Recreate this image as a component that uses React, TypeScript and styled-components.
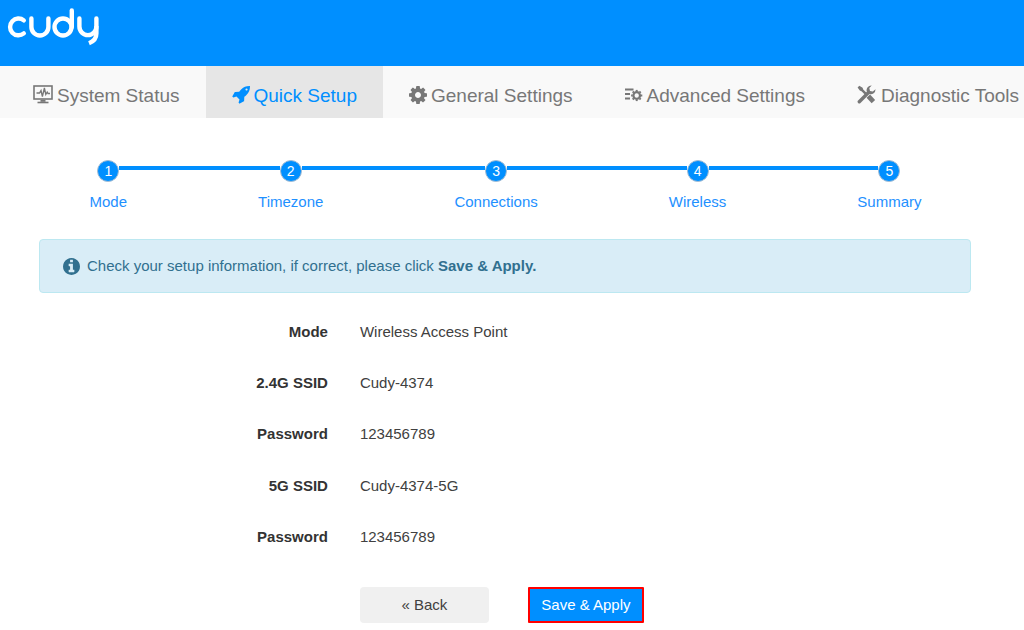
import React from "react";
import styled, { createGlobalStyle } from "styled-components";

const GlobalStyle = createGlobalStyle`
  *, *::before, *::after { box-sizing: border-box; }
  body {
    margin: 0;
    background: #fff;
    color: #404040;
    font: 15px/20px "Liberation Sans", Arial, sans-serif;
  }
`;

const Header = styled.header`
  height: 66px;
  padding: 5px 4px;
  background: #008fff;
`;

const LogoLink = styled.a`
  display: inline-block;
  svg { display: block; }
`;

const Nav = styled.nav`
  display: flex;
  height: 52px;
  padding-left: 7px;
  overflow: hidden;
  background: #f9f9f9;
`;

const NavLink = styled.a<{ $active?: boolean }>`
  display: flex;
  flex: none;
  align-items: center;
  gap: 4px;
  padding: 7px 26px 0;
  font-size: 19px;
  white-space: nowrap;
  text-decoration: none;
  color: ${(p) => (p.$active ? "#008fff" : "#777")};
  background: ${(p) => (p.$active ? "#e6e6e6" : "transparent")};
  svg { flex: none; margin-bottom: 2px; }
`;

const Main = styled.main`
  padding: 42px 53px 0 39px;
`;

const Steps = styled.ol`
  display: flex;
  margin: 0 -16px 27px -15px;
  padding: 0;
  list-style: none;
`;

const Step = styled.li`
  flex: 1 1 auto;
  text-align: center;
  color: #1e90ff;
`;

const Track = styled.div`
  display: flex;
  align-items: flex-start;
  margin-bottom: 10px;
`;

const Line = styled.span<{ $hidden?: boolean }>`
  flex: 1;
  height: 4px;
  margin-top: 6px;
  background: ${(p) => (p.$hidden ? "transparent" : "#008fff")};
`;

const Bullet = styled.span`
  width: 22px;
  height: 22px;
  border: 1px solid #a5bdd3;
  border-radius: 50%;
  background: #008fff;
  color: #fff;
  font-size: 14px;
`;

const Alert = styled.div`
  display: flex;
  align-items: center;
  gap: 7px;
  padding: 16px 23px;
  border: 1px solid #bce8f1;
  border-radius: 4px;
  background: #d9edf7;
  color: #31708f;
  svg { flex: none; }
  p { margin: 0; }
`;

const Summary = styled.dl`
  display: grid;
  grid-auto-rows: 1fr;
  min-height: 257px;
  margin: 13px 0 0;
`;

const Row = styled.div`
  display: grid;
  grid-template-columns: 31% 1fr;
  column-gap: 32px;
  align-items: center;
`;

const Term = styled.dt`
  text-align: right;
  font-weight: bold;
  color: #333;
`;

const Value = styled.dd`
  margin: 0;
`;

const Actions = styled.div`
  display: flex;
  gap: 39px;
  margin-top: 24px;
  grid-column: 2;
`;

const Button = styled.button<{ $primary?: boolean }>`
  min-width: ${(p) => (p.$primary ? 116 : 129)}px;
  height: 36px;
  padding: 0 8px;
  border: ${(p) => (p.$primary ? "2px solid #ff0000" : "0")};
  border-radius: ${(p) => (p.$primary ? 1 : 4)}px;
  background: ${(p) => (p.$primary ? "#008fff" : "#f0f0f0")};
  color: ${(p) => (p.$primary ? "#fff" : "#404040")};
  font: inherit;
  white-space: nowrap;
  cursor: pointer;
`;

const Logo = () => (
  <svg width="98" height="44" viewBox="4 5 98 44" fill="none" stroke="#fff" strokeWidth="4.4" strokeLinecap="round" role="img" aria-label="Cudy">
    <path d="M23.800 20.400A8.400 8.400 0 1 0 23.800 33.400" />
    <path d="M31.400 18.500V27a8.500 8.500 0 0 0 17 0V18.500" />
    <circle cx="63" cy="27" r="8.500" />
    <path d="M71.800 10.500V27" />
    <path d="M79.400 18.500V26.600a8.500 8.500 0 0 0 17 0V18.500" />
    <path d="M96.400 26v7.500c0 4.500-3 8-7.400 9.700" strokeLinecap="butt" />
  </svg>
);

const MonitorIcon = () => (
  <svg width="20" height="20" viewBox="0 0 20 20" fill="none" stroke="currentColor">
    <rect x="1" y="1" width="18" height="13" strokeWidth="1.6" />
    <path d="M3.500 8h3L8 5.500l1.400 6 2-8.500 1.400 6.500L14.200 7l.8 1.500h2" strokeWidth="1.300" />
    <path d="M7.500 15.800h5" strokeWidth="2" />
    <path d="M4.500 17.500h11" strokeWidth="1.600" />
  </svg>
);

const RocketIcon = () => (
  <svg width="18" height="18" viewBox="0 128 1664 1664" fill="currentColor">
    <path d="M1440 448q0-40-28-68t-68-28-68 28-28 68 28 68 68 28 68-28 28-68zm224-288q0 249-75.500 430.500t-253.500 360.500q-81 80-195 176l-20 379q-2 16-16 26l-384 224q-7 4-16 4-12 0-23-9l-64-64q-13-14-8-32l85-276-281-281-276 85q-3 1-9 1-14 0-23-9l-64-64q-17-19-5-39l224-384q10-14 26-16l379-20q96-114 176-195 188-187 358-258t431-71q14 0 24 9.500t10 22.500z" />
  </svg>
);

const CogIcon = () => (
  <svg width="18" height="18" viewBox="0 128 1536 1536" fill="currentColor" fillRule="evenodd">
    <path d="M1024 896q0 106-75 181t-181 75-181-75-75-181 75-181 181-75 181 75 75 181zm512-109v222q0 12-8 23t-20 13l-185 28q-19 54-39 91 35 50 107 138 10 12 10 25t-9 23q-27 37-99 108t-94 71q-12 0-26-9l-138-108q-44 23-91 38-16 136-29 186-7 28-36 28h-222q-14 0-24.500-8.500t-11.500-21.500l-28-184q-49-16-90-37l-141 107q-10 9-25 9-14 0-25-11-126-114-165-168-7-10-7-23 0-12 8-23 15-21 51-66.500t54-70.500q-27-50-41-99l-183-27q-13-2-21-12.500t-8-23.500v-222q0-12 8-23t19-13l186-28q14-46 39-92-40-57-107-138-10-12-10-24 0-10 9-23 26-36 98.500-107.500t94.500-71.500q13 0 26 10l138 107q44-23 91-38 16-136 29-186 7-28 36-28h222q14 0 24.500 8.500t11.500 21.500l28 184q49 16 90 37l142-107q9-9 24-9 13 0 25 10 129 119 165 170 7 8 7 22 0 12-8 23-15 21-51 66.500t-54 70.500q26 50 41 98l183 28q13 2 21 12.500t8 23.500z" />
  </svg>
);

const InfoIcon = () => (
  <svg width="17" height="17" viewBox="0 128 1536 1536" fill="currentColor">
    <path d="M1024 1376v-160q0-14-9-23t-23-9h-96v-512q0-14-9-23t-23-9h-320q-14 0-23 9t-9 23v160q0 14 9 23t23 9h96v320h-96q-14 0-23 9t-9 23v160q0 14 9 23t23 9h448q14 0 23-9t9-23zm-128-896v-160q0-14-9-23t-23-9h-192q-14 0-23 9t-9 23v160q0 14 9 23t23 9h192q14 0 23-9t9-23zm640 416q0 209-103 385.500t-279.500 279.500-385.500 103-385.500-103-279.500-279.500-103-385.500 103-385.500 279.500-279.500 385.500-103 385.500 103 279.500 279.500 103 385.500z" />
  </svg>
);

const TEETH = [0, 45, 90, 135, 180, 225, 270, 315];

const ListGearIcon = () => (
  <svg width="18" height="18" viewBox="0 0 18 18" fill="none" stroke="currentColor">
    <path d="M0 3.500h8.500M0 8h5M0 12.500h5" strokeWidth="1.800" />
    <circle cx="11.700" cy="9.500" r="3.300" strokeWidth="2.200" />
    {TEETH.map((angle) => (
      <path key={angle} d="M11.700 5.500V3.900" strokeWidth="2" transform={`rotate(${angle} 11.700 9.500)`} />
    ))}
  </svg>
);

const ToolsIcon = () => (
  <svg width="20" height="20" viewBox="0 0 20 20" fill="none" stroke="currentColor">
    <path d="M2.300 16.700 11.500 7.500" strokeWidth="3.400" strokeLinecap="round" />
    <path d="M14.700 .4a4.800 4.800 0 0 0-4.900 6.200l2.500 2.500a4.800 4.800 0 0 0 6.200-4.900l-2.700 2.400-2.800-.7-.7-2.800z" fill="currentColor" stroke="none" />
    <path d="M.6 2.500 2.300.8l3.300 2 .6 1.700 4.300 4.300-1.700 1.700-4.300-4.300-1.700-.6z" fill="currentColor" stroke="none" />
    <path d="m11.300 11.200 5.100 5.400" strokeWidth="4.800" />
  </svg>
);

const NAV = [
  { label: "System Status", icon: <MonitorIcon /> },
  { label: "Quick Setup", icon: <RocketIcon />, active: true },
  { label: "General Settings", icon: <CogIcon /> },
  { label: "Advanced Settings", icon: <ListGearIcon /> },
  { label: "Diagnostic Tools", icon: <ToolsIcon /> },
];

const STEPS = ["Mode", "Timezone", "Connections", "Wireless", "Summary"];

const FIELDS = [
  ["Mode", "Wireless Access Point"],
  ["2.4G SSID", "Cudy-4374"],
  ["Password", "123456789"],
  ["5G SSID", "Cudy-4374-5G"],
  ["Password", "123456789"],
];

export default function App() {
  return (
    <>
      <GlobalStyle />
      <Header>
        <LogoLink href="#"><Logo /></LogoLink>
      </Header>
      <Nav>
        {NAV.map((item) => (
          <NavLink key={item.label} href="#" $active={item.active}>
            {item.icon}
            <span>{item.label}</span>
          </NavLink>
        ))}
      </Nav>
      <Main>
        <Steps>
          {STEPS.map((label, i) => (
            <Step key={label}>
              <Track>
                <Line $hidden={i === 0} />
                <Bullet>{i + 1}</Bullet>
                <Line $hidden={i === STEPS.length - 1} />
              </Track>
              {label}
            </Step>
          ))}
        </Steps>
        <Alert role="status">
          <InfoIcon />
          <p>Check your setup information, if correct, please click <strong>Save &amp; Apply.</strong></p>
        </Alert>
        <Summary>
          {FIELDS.map(([term, value], i) => (
            <Row key={i}>
              <Term>{term}</Term>
              <Value>{value}</Value>
            </Row>
          ))}
        </Summary>
        <Row>
          <Actions>
            <Button type="button">« Back</Button>
            <Button type="button" $primary>Save &amp; Apply</Button>
          </Actions>
        </Row>
      </Main>
    </>
  );
}
